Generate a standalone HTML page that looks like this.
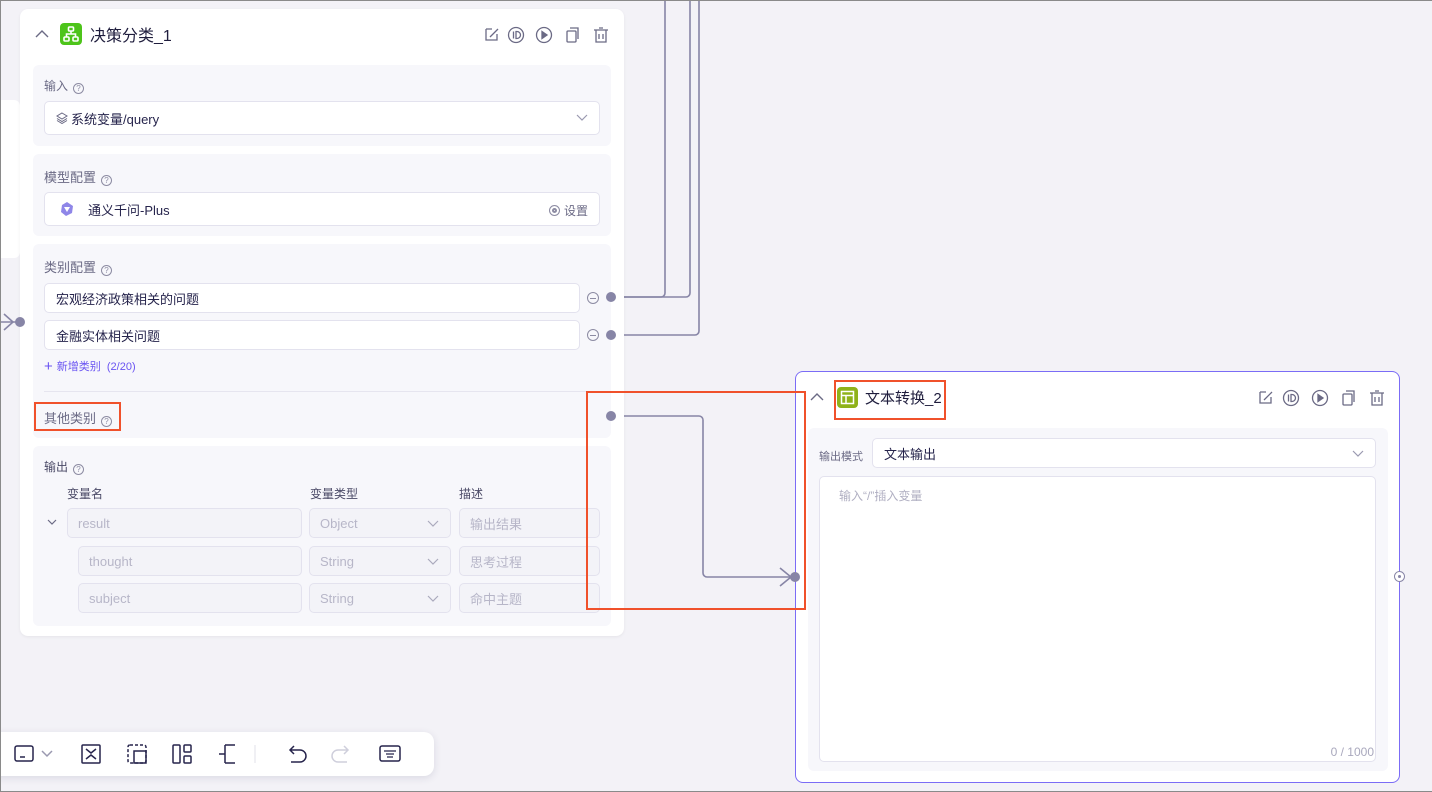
<!DOCTYPE html>
<html><head><meta charset="utf-8"><style>
*{box-sizing:border-box;margin:0;padding:0}
body{width:1432px;height:792px;overflow:hidden;background:#f3f2f7;font-family:"Liberation Sans","Noto Sans CJK SC",sans-serif;position:relative;color:#26244c}
.frame{position:absolute;left:0;top:0;width:1432px;height:792px;border-top:1px solid #8a8a8a;border-left:1px solid #8a8a8a;border-bottom:1px solid #8a8a8a;pointer-events:none;z-index:50}
.abs{position:absolute}
.node{position:absolute;background:#fff;border-radius:8px}
.sec{position:absolute;background:#f7f7fb;border-radius:6px}
.lbl{position:absolute;font-size:12px;color:#6b6a85}
.q{display:inline-block;width:11px;height:11px;border:1px solid #8d8ca3;border-radius:50%;font-size:8px;line-height:9px;text-align:center;color:#8d8ca3;margin-left:5px;vertical-align:-1px}
.inp{position:absolute;background:#fff;border:1px solid #e3e2ee;border-radius:5px;font-size:13px;padding-left:11px;display:flex;align-items:center}
.dis{position:absolute;background:#f3f3f8;border:1px solid #e3e2ee;border-radius:5px;font-size:13px;color:#b7b6c8;padding-left:10px;display:flex;align-items:center}
.dot{position:absolute;width:10px;height:10px;border-radius:50%;background:#8785a6}
.red{position:absolute;border:2px solid #f0512b}
</style></head><body>
<div class="frame"></div>

<div class="node" style="left:-10px;top:100px;width:30px;height:158px;border-radius:6px"></div>

<svg class="abs" style="left:0;top:0;z-index:1" width="1432" height="792">
<g fill="none" stroke="#8785a6" stroke-width="1.6">
<path d="M611 297 H661 a4 4 0 0 0 4 -4 V0"/>
<path d="M611 297 H686 a4 4 0 0 0 4 -4 V0"/>
<path d="M611 335 H695 a4 4 0 0 0 4 -4 V0"/>
<path d="M611 416 H699 a4 4 0 0 1 4 4 V573 a4 4 0 0 0 4 4 H795"/>
<path d="M780 568 L791 577 L780 586"/>
<path d="M0 322 H20"/>
<path d="M4 314 L13 322 L4 330"/>
</g>
</svg>

<div class="node" style="left:20px;top:9px;width:604px;height:627px;box-shadow:0 1px 3px rgba(0,0,0,.06);z-index:2">
 <svg class="abs" style="left:15px;top:20px" width="14" height="10"><path d="M1 8 L7 2 L13 8" fill="none" stroke="#6b6a85" stroke-width="1.4"/></svg>
 <div class="abs" style="left:40px;top:14px;width:22px;height:22px;background:#4dc41a;border-radius:4px">
  <svg width="22" height="22"><g fill="none" stroke="#fff" stroke-width="1.6"><rect x="8.5" y="4" width="5" height="4" rx="1"/><rect x="4" y="14" width="5" height="4" rx="1"/><rect x="13" y="14" width="5" height="4" rx="1"/><path d="M11 8v3M6.5 14v-3h9v3"/></g></svg>
 </div>
 <div class="abs" style="left:70px;top:13px;font-size:16px;color:#1f1d3d">决策分类_1</div>
 <svg class="abs" style="left:462px;top:16px" width="130" height="20"><g fill="none" stroke="#6b6a85" stroke-width="1.3">
  <path d="M4 4h6M4 4v11h11v-6M8 12l8-8"/>
  <circle cx="34" cy="10" r="7.5"/><path d="M31.5 6.5v7M34 6.5v7h1a3.5 3.5 0 0 0 0-7z"/>
  <circle cx="62" cy="10" r="7.5"/><path d="M60 6.5l5 3.5-5 3.5z" fill="#6b6a85"/>
  <rect x="85" y="6" width="9" height="11" rx="1"/><path d="M88 3h8v11"/>
  <path d="M112 5h14M114 5v12h10v-12M117 3h4M117 9v5M121 9v5"/>
 </g></svg>

 <div class="sec" style="left:13px;top:56px;width:578px;height:81px">
  <div class="lbl" style="left:11px;top:12px">输入<span class="q">?</span></div>
  <div class="inp" style="left:11px;top:36px;width:556px;height:34px">
   <svg width="12" height="12" style="margin-right:3px"><g fill="none" stroke="#6b6a85" stroke-width="1"><path d="M6 1L11 4L6 7L1 4z"/><path d="M1 6.5L6 9.5L11 6.5"/><path d="M1 8.5L6 11.5L11 8.5"/></g></svg>系统变量/query
   <svg class="abs" style="right:11px;top:12px" width="12" height="8"><path d="M1 1L6 6L11 1" fill="none" stroke="#9a99b0" stroke-width="1.2"/></svg>
  </div>
 </div>

 <div class="sec" style="left:13px;top:145px;width:578px;height:82px">
  <div class="lbl" style="left:11px;top:13px;font-size:13px">模型配置<span class="q">?</span></div>
  <div class="inp" style="left:11px;top:38px;width:556px;height:34px;padding-left:14px">
   <svg width="16" height="16" style="margin-right:13px"><path d="M8 1L14 5L13 12L7 15L2 11L3 4z" fill="#8f86e8"/><path d="M5 6L11 6L8 11z" fill="#fff"/></svg>通义千问-Plus
   <span class="abs" style="right:11px;top:9px;font-size:12px;color:#6b6a85"><span style="display:inline-block;width:11px;height:11px;border:1.2px solid #8d8ca3;border-radius:50%;vertical-align:-1px;margin-right:4px;box-shadow:inset 0 0 0 2px #fff,inset 0 0 0 4px #8d8ca3"></span>设置</span>
  </div>
 </div>

 <div class="sec" style="left:13px;top:235px;width:578px;height:194px">
  <div class="lbl" style="left:11px;top:13px;font-size:13px">类别配置<span class="q">?</span></div>
  <div class="inp" style="left:11px;top:39px;width:536px;height:30px">宏观经济政策相关的问题</div>
  <div class="inp" style="left:11px;top:76px;width:536px;height:30px">金融实体相关问题</div>
  <div class="abs" style="left:554px;top:48px;width:12px;height:12px;border:1px solid #8d8ca3;border-radius:50%;"><div style="width:6px;height:1px;background:#8d8ca3;margin:4.5px auto"></div></div>
  <div class="abs" style="left:554px;top:85px;width:12px;height:12px;border:1px solid #8d8ca3;border-radius:50%;"><div style="width:6px;height:1px;background:#8d8ca3;margin:4.5px auto"></div></div>
  <div class="abs" style="left:11px;top:114px;font-size:11px;color:#6a54f2"><span style="font-size:15px;vertical-align:-1px;margin-right:4px">+</span>新增类别 &nbsp;(2/20)</div>
  <div class="abs" style="left:11px;top:147px;width:556px;height:1px;background:#e6e5ef"></div>
  <div class="lbl" style="left:11px;top:164px;font-size:13px">其他类别<span class="q">?</span></div>
 </div>
 <div class="red" style="left:14px;top:393px;width:87px;height:29px"></div>

 <div class="sec" style="left:13px;top:437px;width:578px;height:180px">
  <div class="lbl" style="left:11px;top:12px;color:#4a4966">输出<span class="q">?</span></div>
  <div class="lbl" style="left:34px;top:39px;color:#4a4966">变量名</div>
  <div class="lbl" style="left:277px;top:39px;color:#4a4966">变量类型</div>
  <div class="lbl" style="left:426px;top:39px;color:#4a4966">描述</div>
  <svg class="abs" style="left:14px;top:73px" width="10" height="7"><path d="M1 1L5 5L9 1" fill="none" stroke="#6b6a85" stroke-width="1.2"/></svg>
  <div class="dis" style="left:34px;top:62px;width:235px;height:30px">result</div>
  <div class="dis" style="left:45px;top:100px;width:224px;height:30px">thought</div>
  <div class="dis" style="left:45px;top:137px;width:224px;height:30px">subject</div>
  <div class="dis" style="left:276px;top:62px;width:142px;height:30px">Object<svg class="abs" style="right:11px;top:11px" width="12" height="8"><path d="M1 1L6 6L11 1" fill="none" stroke="#aaa9bd" stroke-width="1.2"/></svg></div>
  <div class="dis" style="left:276px;top:100px;width:142px;height:30px">String<svg class="abs" style="right:11px;top:11px" width="12" height="8"><path d="M1 1L6 6L11 1" fill="none" stroke="#aaa9bd" stroke-width="1.2"/></svg></div>
  <div class="dis" style="left:276px;top:137px;width:142px;height:30px">String<svg class="abs" style="right:11px;top:11px" width="12" height="8"><path d="M1 1L6 6L11 1" fill="none" stroke="#aaa9bd" stroke-width="1.2"/></svg></div>
  <div class="dis" style="left:426px;top:62px;width:141px;height:30px">输出结果</div>
  <div class="dis" style="left:426px;top:100px;width:141px;height:30px">思考过程</div>
  <div class="dis" style="left:426px;top:137px;width:141px;height:30px">命中主题</div>
 </div>
</div>

<div class="dot" style="left:606px;top:292px;z-index:3"></div>
<div class="dot" style="left:606px;top:330px;z-index:3"></div>
<div class="dot" style="left:606px;top:411px;z-index:3"></div>
<div class="dot" style="left:15px;top:317px;z-index:3"></div>
<div class="red" style="left:586px;top:391px;width:220px;height:219px;z-index:4"></div>

<div class="node" style="left:795px;top:371px;width:605px;height:412px;border:1.5px solid #7b6cf6;z-index:2">
 <svg class="abs" style="left:14px;top:20px" width="14" height="10"><path d="M1 8 L7 2 L13 8" fill="none" stroke="#6b6a85" stroke-width="1.4"/></svg>
 <div class="abs" style="left:41px;top:15px;width:21px;height:21px;background:#8fb21a;border-radius:4px">
  <svg width="21" height="21"><g fill="none" stroke="#fff" stroke-width="1.5"><rect x="4.5" y="4.5" width="12" height="12"/><path d="M4.5 8.5h12M9 8.5v8"/></g></svg>
 </div>
 <div class="abs" style="left:69px;top:15px;font-size:15px;color:#1f1d3d">文本转换_2</div>
 <svg class="abs" style="left:460px;top:16px" width="130" height="20"><g fill="none" stroke="#6b6a85" stroke-width="1.3">
  <path d="M4 4h6M4 4v11h11v-6M8 12l8-8"/>
  <circle cx="35" cy="10" r="7.5"/><path d="M32.5 6.5v7M35 6.5v7h1a3.5 3.5 0 0 0 0-7z"/>
  <circle cx="64" cy="10" r="7.5"/><path d="M62 6.5l5 3.5-5 3.5z" fill="#6b6a85"/>
  <rect x="87" y="6" width="9" height="11" rx="1"/><path d="M90 3h8v11"/>
  <path d="M114 5h14M116 5v12h10v-12M119 3h4M119 9v5M123 9v5"/>
 </g></svg>
 <div class="sec" style="left:12px;top:56px;width:580px;height:343px">
  <div class="lbl" style="left:11px;top:20px;font-size:11px">输出模式</div>
  <div class="inp" style="left:64px;top:10px;width:504px;height:30px;font-size:13px">文本输出
   <svg class="abs" style="right:11px;top:11px" width="12" height="8"><path d="M1 1L6 6L11 1" fill="none" stroke="#9a99b0" stroke-width="1.2"/></svg></div>
  <div class="inp" style="left:11px;top:48px;width:557px;height:286px;align-items:flex-start;padding:10px 19px;font-size:12px;color:#b0afc2">输入“/”插入变量
   <span class="abs" style="right:1px;bottom:2px;font-size:12px;color:#a9a8bd">0 / 1000</span></div>
 </div>
</div>
<div class="red" style="left:834px;top:380px;width:112px;height:40px;z-index:4"></div>
<div class="dot" style="left:790px;top:572px;z-index:3"></div>
<div class="abs" style="left:1394px;top:571px;width:11px;height:11px;border:1px solid #8785a6;border-radius:50%;background:#fff;z-index:3"><div style="width:3px;height:3px;background:#8785a6;border-radius:50%;margin:3px auto"></div></div>

<div class="abs" style="left:-10px;top:732px;width:444px;height:44px;background:#fff;border-radius:10px;box-shadow:0 2px 8px rgba(40,40,80,.12);z-index:5">
 <svg class="abs" style="left:20px;top:0" width="424" height="44"><g fill="none" stroke="#26244c" stroke-width="1.5">
  <rect x="5" y="14" width="18" height="15" rx="2"/><path d="M10 25h5"/>
  <path d="M32 19l5 5 5-5" stroke="#9a99b0"/>
  <rect x="72" y="13" width="18" height="18" rx="1"/><path d="M76 17l5 4 5-4M76 27l5-4 5 4"/>
  <rect x="118" y="13" width="18" height="18" rx="2" stroke-dasharray="3 2"/><rect x="124" y="19" width="12" height="12"/>
  <rect x="163" y="13" width="7" height="18" rx="1"/><rect x="174" y="13" width="7" height="7" rx="1"/><rect x="174" y="24" width="7" height="7" rx="1"/>
  <path d="M209 22h6M215 13v18M215 13h10M215 31h10"/>
  <path d="M245 13v18" stroke="#e0e0ea" stroke-width="1"/>
  <path d="M280 18h10a6 6 0 0 1 0 12h-9M284 14l-4 4 4 4"/>
  <path d="M338 18h-10a6 6 0 0 0 0 12h9M334 14l4 4-4 4" stroke="#cfcfdc"/>
  <rect x="370" y="14" width="20" height="15" rx="2"/><path d="M374 19h12M376 22h8M377 25h6" stroke-width="1.2"/>
 </g></svg>
</div>
</body></html>
